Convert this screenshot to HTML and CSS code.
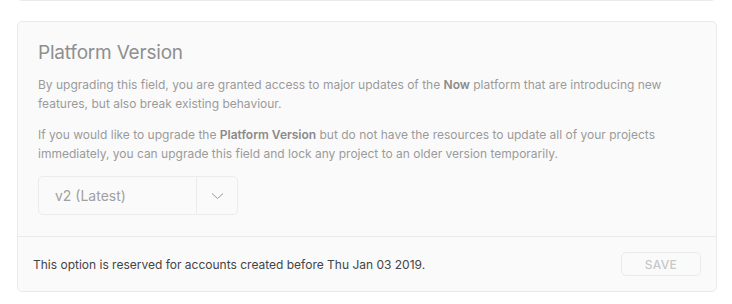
FILE: index.html
```html
<!DOCTYPE html>
<html>
<head>
<meta charset="utf-8">
<link rel="stylesheet" href="styles.css">
</head>
<body>
<div class="prev-card"></div>
<section class="card">
  <div class="card-body">
    <h2 class="card-title">Platform Version</h2>
    <p class="text">By upgrading this field, you are granted access to major updates of the <b>Now</b> platform that are introducing new features, but also break existing behaviour.</p>
    <p class="text">If you would like to upgrade the <b>Platform Version</b> but do not have the resources to update all of your projects immediately, you can upgrade this field and lock any project to an older version temporarily.</p>
    <div class="select">
      <span class="select-value">v2 (Latest)</span>
      <span class="select-arrow">
        <svg width="13" height="8" viewBox="0 0 13 8"><path d="M1 1.5 L6.5 6.5 L12 1.5" fill="none" stroke="#999" stroke-width="1"/></svg>
      </span>
    </div>
  </div>
  <footer class="card-footer">
    <span class="note">This option is reserved for accounts created before Thu Jan 03 2019.</span>
    <button class="btn">SAVE</button>
  </footer>
</section>
</body>
</html>
```
FILE: styles.css
```css
* { box-sizing: border-box; }
html, body { margin: 0; padding: 0; background: #fff; }
body {
  font-family: Inter, "Noto Sans", sans-serif;
  padding: 0 16px 0 17px;
  -webkit-font-smoothing: antialiased;
}
.prev-card {
  margin-top: -6px;
  height: 7px;
  border: 1px solid #eaeaea;
  border-top: none;
  border-radius: 0 0 5px 5px;
  background: #fff;
}
.card {
  margin-top: 20px;
  width: 700px;
  border: 1px solid #eaeaea;
  border-radius: 5px;
  background: #fafafa;
}
.card-body {
  padding: 19px 20px 21px 20px;
}
.card-title {
  margin: 0 0 10px 0;
  font-size: 19px;
  line-height: 24px;
  font-weight: 400;
  color: #8f8f8f;
  letter-spacing: -0.2px;
}
.text {
  margin: 0 0 12px 0;
  font-size: 12px;
  line-height: 19px;
  color: #9a9a9a;
}
.text b { font-weight: 600; color: #8a8a8a; }
.select {
  margin-top: 13px;
  width: 200px;
  height: 39px;
  border: 1px solid #ececec;
  border-radius: 5px;
  display: flex;
  align-items: stretch;
  background: #fafafa;
}
.select-value {
  flex: 1;
  display: flex;
  align-items: center;
  padding-left: 16px;
  font-size: 14px;
  color: #a0a0a0;
  border-right: 1px solid #ececec;
}
.select-arrow {
  width: 40px;
  display: flex;
  align-items: center;
  justify-content: center;
}
.card-footer {
  border-top: 1px solid #eaeaea;
  height: 55px;
  padding: 0 15px;
  display: flex;
  align-items: center;
  justify-content: space-between;
}
.note {
  font-size: 12px;
  color: #444;
}
.btn {
  width: 80px;
  height: 24px;
  border: 1px solid #eaeaea;
  border-radius: 5px;
  background: #fafafa;
  color: #c8c8c8;
  font-family: inherit;
  font-size: 12px;
  font-weight: 500;
  letter-spacing: 0.3px;
  padding: 0;
}
```
